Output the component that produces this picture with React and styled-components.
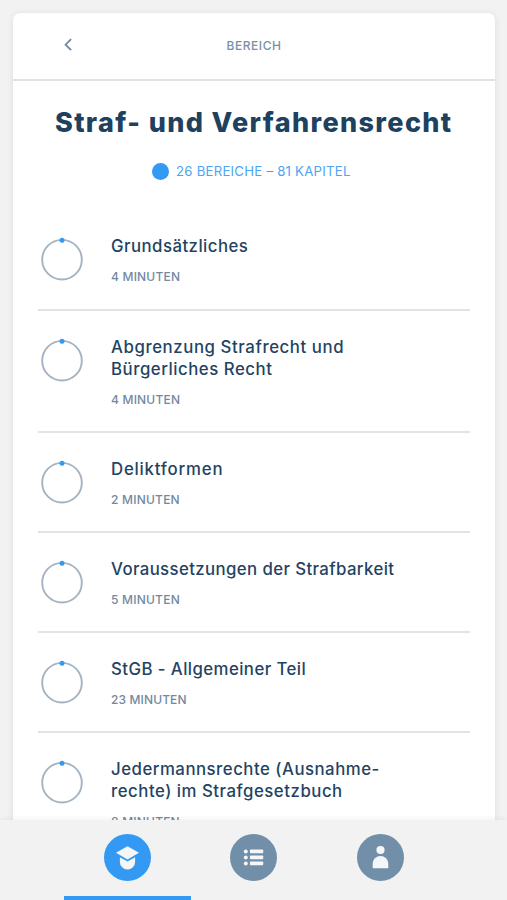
import React from 'react';
import styled, { createGlobalStyle } from 'styled-components';

const GlobalStyle = createGlobalStyle`
  * { box-sizing: border-box; }
  html, body { margin: 0; padding: 0; background: #f2f2f2; overflow: hidden; }
  body { font-family: Inter, "Open Sans", sans-serif; }
`;

const Screen = styled.div`
  display: flex;
  flex-direction: column;
  width: 507px;
  height: 900px;
  overflow: hidden;
  background: #f2f2f2;
`;

const Viewport = styled.div`
  height: 820px;
  flex: none;
  padding: 13px 12px 0 13px;
  overflow: hidden;
`;

const Card = styled.main`
  height: 860px;
  background: #fff;
  border-radius: 7px;
  box-shadow: 0 1px 7px rgba(0, 0, 0, 0.09);
`;

const Header = styled.header`
  display: grid;
  grid-template-columns: 110px 1fr 110px;
  align-items: center;
  height: 68px;
  padding-bottom: 2px;
  border-bottom: 2px solid #e0e2e3;
`;

const BackButton = styled.button`
  display: flex;
  justify-content: center;
  padding: 0;
  border: 0;
  background: none;
`;

const HeaderTitle = styled.span`
  text-align: center;
  color: #7890a8;
  font-size: 12px;
  font-weight: 500;
  letter-spacing: ${(p) => p.$tracking}px;
`;

const Title = styled.h1`
  margin: 25px 0 0 42px;
  color: #1d415f;
  font-size: 27px;
  font-weight: 800;
  line-height: 34px;
  white-space: nowrap;
  letter-spacing: ${(p) => p.$tracking}px;
`;

const Summary = styled.div`
  display: flex;
  align-items: center;
  gap: 7px;
  height: 20px;
  margin: 21px 0 0 139px;
  color: #4ca4f2;
  font-size: 13.2px;
  white-space: nowrap;
  letter-spacing: ${(p) => p.$tracking}px;
`;

const Dot = styled.span`
  width: 17px;
  height: 17px;
  border-radius: 50%;
  background: #3399f3;
`;

const List = styled.ul`
  margin: 29.4px 25px 0 25px;
  padding: 0;
  list-style: none;
`;

const Row = styled.li`
  display: grid;
  grid-template-columns: 73px 1fr;
  align-items: start;
  padding: 25px 0 23.2px;
  border-bottom: 2px solid #e1e3e4;
`;

const Ring = styled.svg`
  display: block;
  width: 48px;
  height: 50px;
`;

const RowTitle = styled.div`
  color: #1f4463;
  font-size: 16.8px;
  font-weight: 500;
  line-height: 22px;
  white-space: nowrap;
`;

const Line = styled.span`
  display: block;
  letter-spacing: ${(p) => p.$tracking}px;
`;

const Duration = styled.div`
  margin-top: 12px;
  color: #7389a0;
  font-size: 12px;
  font-weight: 500;
  line-height: 16px;
  letter-spacing: ${(p) => p.$tracking}px;
`;

const TabBar = styled.nav`
  position: relative;
  display: grid;
  grid-template-columns: repeat(3, 126.6px);
  height: 80px;
  padding-left: 64px;
  background: #f2f2f2;
  box-shadow: 0 -1px 6px rgba(0, 0, 0, 0.06);
`;

const Tab = styled.button`
  display: flex;
  justify-content: center;
  align-items: flex-start;
  padding: 14px 0 0;
  border: 0;
  border-bottom: 4px solid ${(p) => (p.$active ? '#3399f3' : 'transparent')};
  background: none;
`;

const TabIcon = styled.svg`
  width: 47px;
  height: 47px;
  border-radius: 50%;
  background: ${(p) => (p.$active ? '#3399f3' : '#728fa9')};
  fill: #f5f6f8;
`;

const chapters = [
  { lines: [['Grundsätzliches', 0.46]], duration: '4 MINUTEN', tracking: 0.2 },
  { lines: [['Abgrenzung Strafrecht und', 0.58], ['Bürgerliches Recht', 0.53]], duration: '4 MINUTEN', tracking: 0.2 },
  { lines: [['Deliktformen', 0.8]], duration: '2 MINUTEN', tracking: 0.22 },
  { lines: [['Voraussetzungen der Strafbarkeit', 0.39]], duration: '5 MINUTEN', tracking: 0.22 },
  { lines: [['StGB - Allgemeiner Teil', 0.43]], duration: '23 MINUTEN', tracking: 0.12 },
  { lines: [['Jedermannsrechte (Ausnahme-', 0.5], ['rechte) im Strafgesetzbuch', 0.52]], duration: '8 MINUTEN', tracking: 0.2 },
];

function ProgressRing() {
  return (
    <Ring viewBox="0 0 48 50">
      <circle cx="24" cy="24.7" r="19.8" fill="none" stroke="#a5b3c2" strokeWidth="1.9" />
      <circle cx="24" cy="5.2" r="2.5" fill="#3399f3" />
    </Ring>
  );
}

export default function App() {
  return (
    <>
      <GlobalStyle />
      <Screen>
        <Viewport>
          <Card>
            <Header>
              <BackButton aria-label="Zurück">
                <svg width="10" height="14" viewBox="0 0 10 14" fill="none" stroke="#7088a2" strokeWidth="1.8">
                  <path d="M8.1 1.2 2.6 6.7l5.5 5.5" />
                </svg>
              </BackButton>
              <HeaderTitle $tracking={0.55}>BEREICH</HeaderTitle>
            </Header>
            <Title $tracking={1.37}>Straf- und Verfahrensrecht</Title>
            <Summary $tracking={0.24}>
              <Dot />
              <span>26 BEREICHE – 81 KAPITEL</span>
            </Summary>
            <List>
              {chapters.map((chapter) => (
                <Row key={chapter.lines[0][0]}>
                  <ProgressRing />
                  <div>
                    <RowTitle>
                      {chapter.lines.map(([text, tracking]) => (
                        <Line key={text} $tracking={tracking}>{text}</Line>
                      ))}
                    </RowTitle>
                    <Duration $tracking={chapter.tracking}>{chapter.duration}</Duration>
                  </div>
                </Row>
              ))}
            </List>
          </Card>
        </Viewport>
        <TabBar>
          <Tab $active aria-label="Lernen">
            <TabIcon $active viewBox="0 0 47 47">
              <path d="M12 18.8 23.5 12.2 35 18.8 23.5 25.4z" />
              <path d="M15.9 23.2 23.5 27.6 31.1 23.2V27.9a7.6 7.6 0 0 1-15.2 0z" />
            </TabIcon>
          </Tab>
          <Tab aria-label="Liste">
            <TabIcon viewBox="0 0 47 47">
              <circle cx="15.8" cy="17.4" r="2" />
              <circle cx="15.8" cy="23.4" r="2" />
              <circle cx="15.8" cy="29.4" r="2" />
              <rect x="20" y="15.5" width="13.2" height="3.8" rx=".7" />
              <rect x="20" y="21.5" width="13.2" height="3.8" rx=".7" />
              <rect x="20" y="27.5" width="13.2" height="3.8" rx=".7" />
            </TabIcon>
          </Tab>
          <Tab aria-label="Profil">
            <TabIcon viewBox="0 0 47 47">
              <circle cx="23.5" cy="16" r="4.1" />
              <path d="M15.7 34.2v-4.4a7.8 7.8 0 0 1 15.6 0v4.4z" />
            </TabIcon>
          </Tab>
        </TabBar>
      </Screen>
    </>
  );
}
